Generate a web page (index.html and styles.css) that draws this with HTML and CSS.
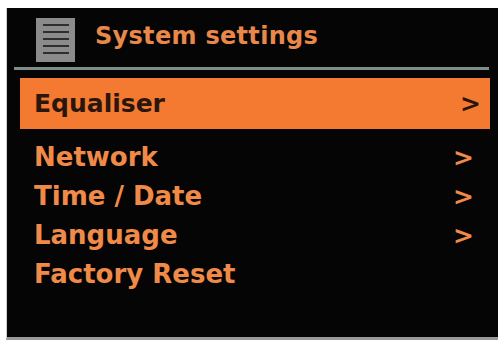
FILE: index.html
```html
<!DOCTYPE html>
<html>
<head>
<meta charset="utf-8">
<link rel="stylesheet" href="styles.css">
</head>
<body>
<div class="screen">
  <div class="header">
    <div class="icon">
      <span class="icon-line"></span>
      <span class="icon-line"></span>
      <span class="icon-line"></span>
      <span class="icon-line"></span>
      <span class="icon-line"></span>
    </div>
    <div class="title">System settings</div>
  </div>
  <div class="separator"></div>
  <div class="selected">
    <span>Equaliser</span>
    <span class="chev">&gt;</span>
  </div>
  <div class="menu">
    <div class="row"><span>Network</span><span class="chev">&gt;</span></div>
    <div class="row"><span>Time / Date</span><span class="chev">&gt;</span></div>
    <div class="row"><span>Language</span><span class="chev">&gt;</span></div>
    <div class="row"><span>Factory Reset</span></div>
  </div>
</div>
</body>
</html>
```
FILE: styles.css
```css
html, body {
  margin: 0;
  padding: 0;
  background: #ffffff;
  width: 498px;
  height: 340px;
  overflow: hidden;
}
.screen {
  margin: 8px 0 0 6px;
  height: 329px;
  background: #050505;
  border-bottom: 3px solid #9a9a9a;
  border-left: 1px solid #d0d0d0;
  font-family: "DejaVu Sans", "Verdana", sans-serif;
  font-weight: bold;
  font-size: 26px;
  color: #ef8a48;
  box-sizing: content-box;
}
.header {
  display: flex;
  align-items: flex-start;
  padding: 10px 0 0 29px;
  height: 44px;
}
.icon {
  width: 39px;
  height: 44px;
  background: #8b8b8b;
  display: flex;
  flex-direction: column;
  justify-content: space-between;
  padding: 6px 6px 8px 7px;
  box-sizing: border-box;
}
.icon-line {
  display: block;
  height: 2px;
  background: #2e2e2e;
}
.title {
  margin-left: 20px;
  margin-top: 4px;
  font-size: 24px;
  line-height: 28px;
  color: #e8884a;
  letter-spacing: 0.3px;
}
.separator {
  margin: 5px 9px 0 7px;
  height: 3px;
  background: #7f8d87;
}
.selected {
  margin: 8px 8px 0 13px;
  height: 51px;
  line-height: 51px;
  font-size: 25px;
  background: #f47a32;
  color: #2a160c;
  display: flex;
  justify-content: space-between;
  padding: 0 9px 0 14px;
}
.menu {
  margin: 9px 0 0 27px;
  padding-right: 24px;
}
.row {
  height: 39px;
  line-height: 39px;
  display: flex;
  justify-content: space-between;
}
.chev {
  font-size: 25px;
}
```
